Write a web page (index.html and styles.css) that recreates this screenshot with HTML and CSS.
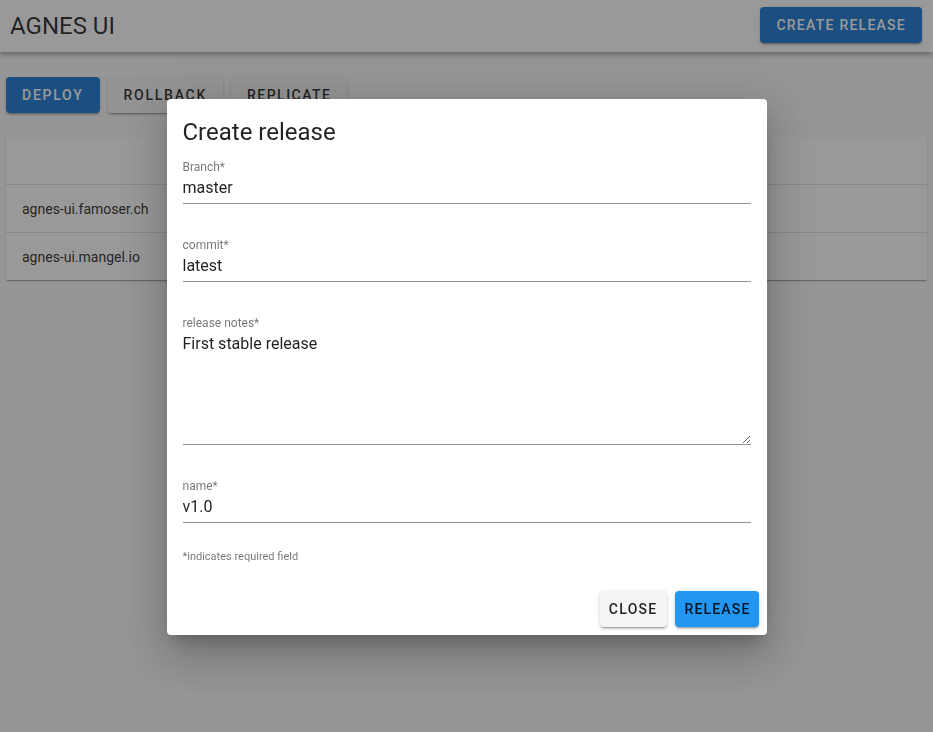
FILE: index.html
```html
<!DOCTYPE html>
<html>
<head>
<meta charset="utf-8">
<title>AGNES UI</title>
<link rel="stylesheet" href="styles.css">
</head>
<body>
<header class="appbar">
  <div class="app-title">AGNES UI</div>
  <button class="btn btn-primary">Create release</button>
</header>
<main class="content">
  <div class="actions">
    <button class="btn btn-primary btn-wide">Deploy</button>
    <button class="btn btn-grey btn-wide">Rollback</button>
    <button class="btn btn-grey btn-wide btn-rep">Replicate</button>
  </div>
  <div class="table-card">
    <div class="row head"></div>
    <div class="row">agnes-ui.famoser.ch</div>
    <div class="row">agnes-ui.mangel.io</div>
  </div>
</main>
<div class="scrim">
  <div class="dialog">
    <div class="dialog-title">Create release</div>
    <div class="dialog-body">
      <label class="field">
        <span class="field-label">Branch*</span>
        <input class="field-input" type="text" value="master">
      </label>
      <label class="field">
        <span class="field-label">commit*</span>
        <input class="field-input" type="text" value="latest">
      </label>
      <label class="field">
        <span class="field-label">release notes*</span>
        <textarea class="field-input field-area">First stable release</textarea>
      </label>
      <label class="field">
        <span class="field-label">name*</span>
        <input class="field-input" type="text" value="v1.0">
      </label>
      <div class="hint">*indicates required field</div>
    </div>
    <div class="dialog-actions">
      <button class="btn btn-grey btn-close">Close</button>
      <button class="btn btn-blue btn-release">Release</button>
    </div>
  </div>
</div>
</body>
</html>
```

FILE: styles.css
```css
* { box-sizing: border-box; }
html, body { margin: 0; padding: 0; }
body {
  font-family: Roboto, "Liberation Sans", sans-serif;
  background: #fafafa;
  color: rgba(0,0,0,0.87);
  width: 933px;
  height: 732px;
  overflow: hidden;
}
.appbar {
  height: 52px;
  background: #ffffff;
  display: flex;
  align-items: center;
  justify-content: space-between;
  padding: 0 11px 3px 10px;
  box-shadow: 0 2px 4px -1px rgba(0,0,0,.2), 0 4px 5px 0 rgba(0,0,0,.14), 0 1px 10px 0 rgba(0,0,0,.12);
  position: relative;
  z-index: 1;
}
.app-title {
  font-size: 24px;
  line-height: 30px;
  padding-top: 2px;
  font-weight: 400;
  color: rgba(0,0,0,0.87);
}
.btn {
  font-family: Roboto, "Liberation Sans", sans-serif;
  height: 36px;
  border: none;
  border-radius: 4px;
  padding: 0 16px;
  font-size: 14px;
  font-weight: 500;
  text-transform: uppercase;
  letter-spacing: 1.25px;
  cursor: pointer;
  box-shadow: 0 3px 1px -2px rgba(0,0,0,.2), 0 2px 2px 0 rgba(0,0,0,.14), 0 1px 5px 0 rgba(0,0,0,.12);
}
.btn-wide { letter-spacing: 1.75px; }
.btn-rep { letter-spacing: 1.45px; }
.btn-primary { background: #1976d2; color: #fff; }
.btn-grey { background: #f5f5f5; color: rgba(0,0,0,0.87); }
.btn-blue { background: #2196f3; color: rgba(0,0,0,0.87); }
.btn-close { padding: 0 9px 0 9px; letter-spacing: 1.3px; }
.btn-release { padding: 0 8px 0 10px; letter-spacing: 1.15px; }
.content { padding: 25px 6px 0; }
.actions { display: flex; gap: 8px; }
.table-card {
  margin-top: 24px;
  background: #fff;
  border-radius: 2px;
  box-shadow: 0 2px 1px -1px rgba(0,0,0,.2), 0 1px 1px 0 rgba(0,0,0,.14), 0 1px 3px 0 rgba(0,0,0,.12);
}
.row {
  height: 48px;
  display: flex;
  align-items: center;
  padding: 0 16px;
  font-size: 14px;
  border-top: 1px solid rgba(0,0,0,0.12);
}
.row.head { border-top: none; height: 47px; }
.scrim {
  position: fixed;
  inset: 0;
  background: rgba(33,33,33,0.46);
  display: flex;
  align-items: center;
  justify-content: center;
  padding-top: 2px;
  z-index: 5;
}
.dialog {
  width: 600px;
  height: 536px;
  background: #fff;
  border-radius: 4px;
  box-shadow: 0 11px 15px -7px rgba(0,0,0,.2), 0 24px 38px 3px rgba(0,0,0,.14), 0 9px 46px 8px rgba(0,0,0,.12);
  display: flex;
  flex-direction: column;
}
.dialog-title {
  padding: 17px 16px 0;
  font-size: 24px;
  line-height: 32px;
  font-weight: 400;
  color: rgba(0,0,0,0.87);
}
.dialog-body {
  padding: 11px 16px 0;
  display: flex;
  flex-direction: column;
  gap: 33px;
}
.field { display: flex; flex-direction: column; }
.field-label {
  font-size: 12px;
  line-height: 16px;
  color: rgba(0,0,0,0.54);
}
.field-input {
  font-family: Roboto, "Liberation Sans", sans-serif;
  font-size: 16px;
  line-height: 24px;
  height: 29px;
  padding: 0 0 4px;
  border: none;
  border-bottom: 1px solid #949494;
  outline: none;
  background: transparent;
  color: rgba(0,0,0,0.87);
  width: 100%;
  margin: 0;
}
.field-area {
  height: 114px;
  padding-top: 1px;
  resize: vertical;
  display: block;
}
.hint {
  margin-top: -6px;
  font-size: 11px;
  line-height: 14px;
  color: rgba(0,0,0,0.54);
}
.dialog-actions {
  margin-top: auto;
  padding: 8px;
  display: flex;
  justify-content: flex-end;
  gap: 8px;
}
```
